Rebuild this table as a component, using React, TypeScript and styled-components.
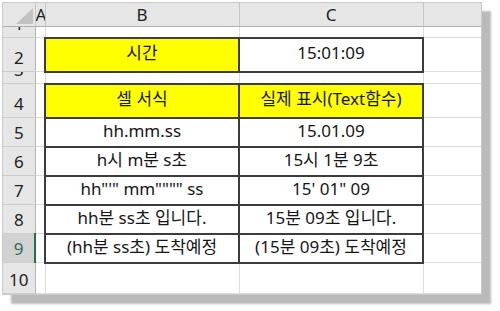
import React from 'react';
import styled, { createGlobalStyle } from 'styled-components';

const GlobalStyle = createGlobalStyle`
  html, body {
    margin: 0;
    padding: 0;
    background: #ffffff;
  }
  body {
    font-family: 'Noto Sans', 'Noto Sans CJK KR', sans-serif;
  }
`;

const Page = styled.div`
  width: 500px;
  height: 311px;
  padding: 2px 0 0 2px;
  box-sizing: border-box;
`;

const Sheet = styled.div`
  width: 480px;
  background: #ffffff;
  border: 1px solid #c9c9c9;
  box-sizing: border-box;
  box-shadow: 9px 9px 2px rgba(0, 0, 0, 0.27);
  overflow: hidden;
`;

const Grid = styled.table`
  border-collapse: collapse;
  table-layout: fixed;
  width: 478px;
  font-family: 'Noto Sans', 'Noto Sans CJK KR', sans-serif;
`;

const ColHead = styled.th`
  height: 23px;
  padding: 0;
  background: #e6e6e6;
  border-right: 1px solid #c6c6c6;
  border-bottom: 1px solid #b0b0b0;
  font-weight: normal;
  font-size: 17px;
  line-height: 20px;
  color: #222;
  text-align: center;
  vertical-align: middle;
  overflow: hidden;
  white-space: nowrap;
`;

const Corner = styled(ColHead)`
  position: relative;
`;

const CornerMark = styled.svg`
  position: absolute;
  right: 2px;
  bottom: 2px;
`;

const RowHead = styled.td<{ $selected?: boolean }>`
  padding: 0;
  background: ${p => (p.$selected ? '#d2d2d2' : '#e6e6e6')};
  border-right: ${p => (p.$selected ? '2px solid #217346' : '1px solid #b5b5b5')};
  border-bottom: 1px solid #cdcdcd;
  color: ${p => (p.$selected ? '#2f6f46' : '#222')};
  font-size: 17px;
  line-height: 20px;
  text-align: center;
  vertical-align: bottom;
`;

const Clip = styled.div<{ $h: number }>`
  height: ${p => p.$h}px;
  overflow: hidden;
  display: flex;
  align-items: flex-end;
  justify-content: center;
`;

const RowNum = styled.span`
  display: block;
  margin-bottom: 3px;
`;

const Cell = styled.td<{ $fill?: string }>`
  padding: 0 0 3px 0;
  background: ${p => p.$fill ?? '#ffffff'};
  border: 2px solid #3c3c3c;
  font-size: 17px;
  line-height: 22px;
  color: #161616;
  text-align: center;
  vertical-align: middle;
  white-space: nowrap;
`;

const PlainCell = styled.td`
  padding: 0;
  border-right: 1px solid #dcdcdc;
  border-bottom: 1px solid #dcdcdc;
`;

type Row = { n: number; h: number; b?: string; c?: string; fillB?: string; fillC?: string };

const YELLOW = '#ffff00';

const rows: Row[] = [
  { n: 1, h: 11 },
  { n: 2, h: 34, b: '시간', c: '15:01:09', fillB: YELLOW },
  { n: 3, h: 12 },
  { n: 4, h: 34, b: '셀 서식', c: '실제 표시(Text함수)', fillB: YELLOW, fillC: YELLOW },
  { n: 5, h: 29, b: 'hh.mm.ss', c: '15.01.09' },
  { n: 6, h: 29, b: 'h시 m분 s초', c: '15시 1분 9초' },
  { n: 7, h: 29, b: 'hh"\'" mm"""" ss', c: '15\' 01" 09' },
  { n: 8, h: 29, b: 'hh분 ss초 입니다.', c: '15분 09초 입니다.' },
  { n: 9, h: 29, b: '(hh분 ss초) 도착예정', c: '(15분 09초) 도착예정' },
  { n: 10, h: 31 },
];

export default function App() {
  return (
    <>
      <GlobalStyle />
      <Page>
        <Sheet>
          <Grid>
            <colgroup>
              <col style={{ width: 32 }} />
              <col style={{ width: 10 }} />
              <col style={{ width: 194 }} />
              <col style={{ width: 184 }} />
              <col style={{ width: 58 }} />
            </colgroup>
            <thead>
              <tr>
                <Corner>
                  <CornerMark width="17" height="16" viewBox="0 0 17 16">
                    <polygon points="17,0 17,16 0,16" fill="#c2c2c2" />
                  </CornerMark>
                </Corner>
                <ColHead>A</ColHead>
                <ColHead>B</ColHead>
                <ColHead>C</ColHead>
                <ColHead />
              </tr>
            </thead>
            <tbody>
              {rows.map(r => (
                <tr key={r.n} style={{ height: r.h }}>
                  <RowHead $selected={r.n === 9}>
                    <Clip $h={r.h - 1}>
                      <RowNum>{r.n}</RowNum>
                    </Clip>
                  </RowHead>
                  <PlainCell />
                  {r.b ? (
                    <>
                      <Cell $fill={r.fillB}>{r.b}</Cell>
                      <Cell $fill={r.fillC}>{r.c}</Cell>
                    </>
                  ) : (
                    <>
                      <PlainCell />
                      <PlainCell />
                    </>
                  )}
                  <PlainCell />
                </tr>
              ))}
            </tbody>
          </Grid>
        </Sheet>
      </Page>
    </>
  );
}
